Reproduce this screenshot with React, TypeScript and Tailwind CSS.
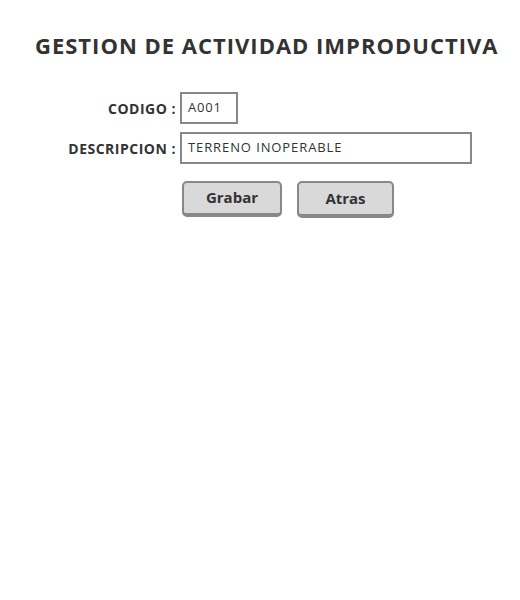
import React from "react";

export default function App() {
  return (
    <div className="w-[520px] h-[600px] bg-white text-[#333333]" style={{ fontFamily: '"Open Sans", "Liberation Sans", sans-serif' }}>
      <div className="pt-[31px] pl-[35px]">
        <h1 className="text-[22px] leading-[28px] font-bold tracking-[1px] whitespace-nowrap">GESTION DE ACTIVIDAD IMPRODUCTIVA</h1>
      </div>
      <div className="mt-[33px] flex flex-col gap-[8px]">
        <div className="flex items-center">
          <div className="w-[176px] text-right text-[14px] font-bold tracking-[0.5px]">CODIGO :</div>
          <div className="ml-[4px] w-[58px] h-[32px] border-2 border-[#888888] flex items-center pl-[6px] text-[13px] tracking-[0.8px]">A001</div>
        </div>
        <div className="flex items-center">
          <div className="w-[176px] text-right text-[14px] font-bold tracking-[0.5px]">DESCRIPCION :</div>
          <div className="ml-[4px] w-[292px] h-[32px] border-2 border-[#888888] flex items-center pl-[6px] text-[13px] tracking-[0.9px]">TERRENO INOPERABLE</div>
        </div>
      </div>
      <div className="mt-[17px] flex pl-[182px] gap-[15px]">
        <button className="w-[100px] h-[36px] rounded-[5px] border-2 border-b-[4px] border-[#888888] bg-[#d9d9d9] text-[15px] font-bold text-[#333333] pb-[2px]">Grabar</button>
        <button className="w-[97px] h-[37px] rounded-[5px] border-2 border-b-[4px] border-[#888888] bg-[#d9d9d9] text-[15px] font-bold text-[#333333]">Atras</button>
      </div>
    </div>
  );
}
